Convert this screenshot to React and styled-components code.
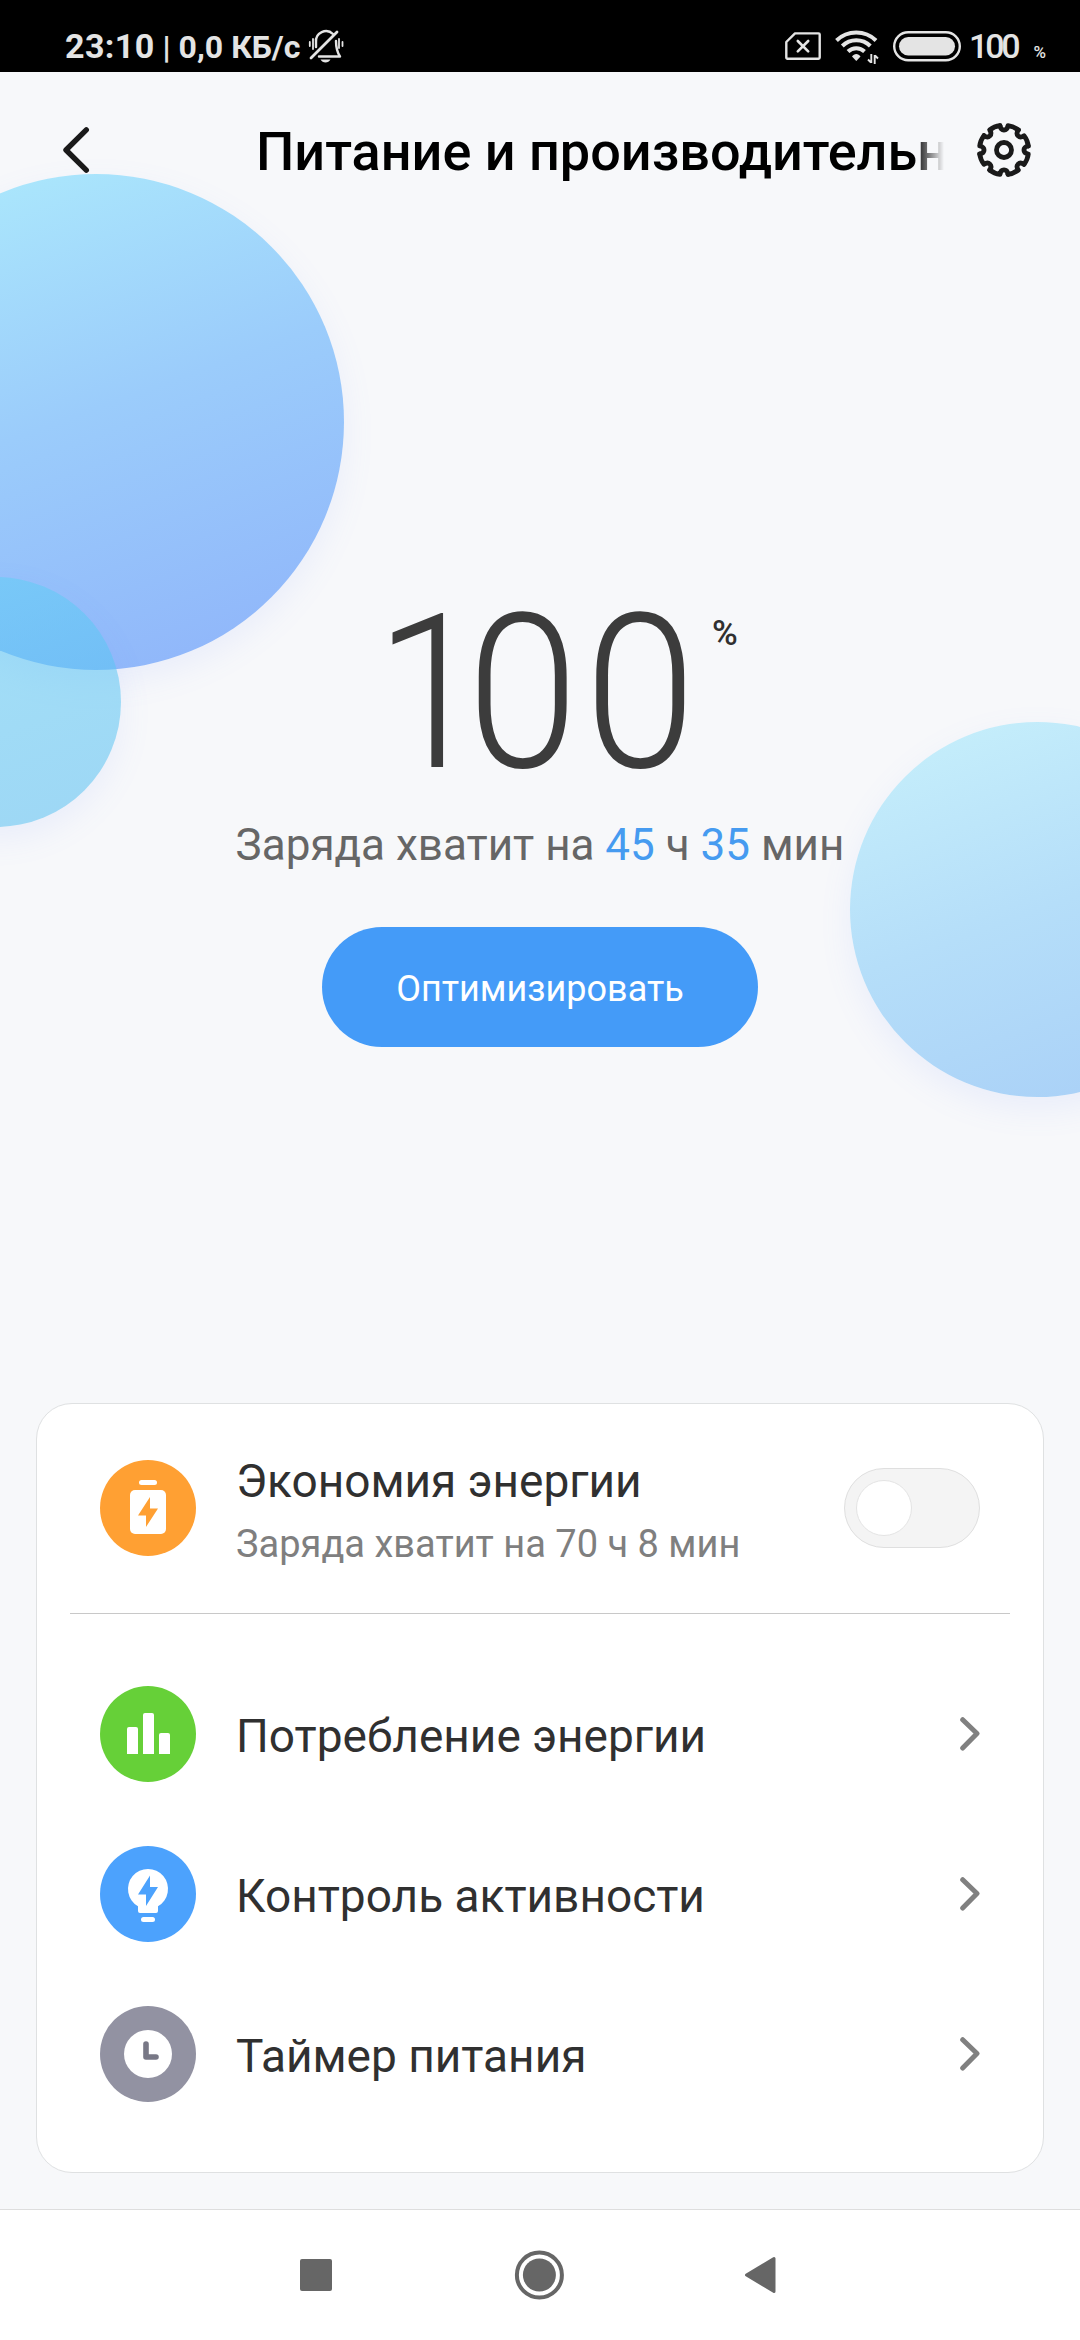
import styled, { createGlobalStyle } from 'styled-components'


const GlobalStyle = createGlobalStyle`
    * {
        box-sizing: border-box;
    }

    body {
        margin: 0;
        background-color: #f7f8fa;
        font-family: Roboto, "Noto Sans", sans-serif;
    }
`

const Screen = styled.div`
    position: relative;
    display: flex;
    flex-direction: column;
    width: 1080px;
    height: 2340px;
    overflow: hidden;
    background-color: #f7f8fa;
`

const StatusBar = styled.div`
    display: flex;
    align-items: flex-start;
    justify-content: space-between;
    height: 72px;
    padding: 0 34px 0 65px;
    background-color: #000;
    color: #e4e4e4;
`

const StatusGroup = styled.div`
    display: flex;
    align-items: baseline;
    padding-top: 25px;
    line-height: 42px;
    white-space: pre;

    svg {
        align-self: flex-start;
    }
`

const StatusIcons = styled.div`
    display: flex;
    align-self: flex-start;
    gap: 14px;
`

const Clock = styled.span`
    font-size: 34px;
    font-weight: 700;
    letter-spacing: 0.4px;
`

const Traffic = styled.span`
    margin-right: 8px;
    font-size: 32px;
    font-weight: 700;
`

const BatteryLevel = styled.span`
    margin: 0 16px 0 8px;
    font-size: 34px;
    font-weight: 500;
    letter-spacing: -3.2px;
`

const BatteryUnit = styled.span`
    font-size: 17px;
    font-weight: 500;
`

const Header = styled.header`
    position: relative;
    z-index: 1;
    display: flex;
    align-items: center;
    height: 156px;
    padding: 0 48px 0 60px;
`

const Title = styled.h1`
    flex: 1;
    overflow: hidden;
    margin: 4px 32px 0 166px;
    color: #000;
    font-size: 54px;
    font-weight: 500;
    line-height: 72px;
    white-space: nowrap;
    -webkit-mask-image: linear-gradient(to right, #000 calc(100% - 30px), transparent);
    mask-image: linear-gradient(to right, #000 calc(100% - 30px), transparent);
`

// the bubbles float behind the content
const Bubble = styled.div`
    position: absolute;
    left: ${props => props.$x}px;
    top: ${props => props.$y}px;
    width: ${props => props.$size}px;
    height: ${props => props.$size}px;
    border-radius: 50%;
    background: ${props => props.$fill};
    box-shadow: 0 12px 32px rgba(120, 150, 255, 0.1);
`

const Hero = styled.section`
    position: relative;
    display: flex;
    flex-direction: column;
    align-items: center;
    height: 1175px;
    padding-top: 364px;
`

const Level = styled.div`
    display: flex;
    align-self: flex-start;
    align-items: flex-start;
    height: 200px;
    margin-left: 375px;
    color: #3c3c3c;
`

const LevelValue = styled.span`
    width: 337px;
    font-size: 216px;
    font-weight: 300;
    line-height: 203px;
    letter-spacing: 6.7px;
    white-space: nowrap;
    transform: scaleX(0.93);
    transform-origin: left;
`

const FirstDigit = styled.span`
    letter-spacing: -21px;
`

const LevelUnit = styled.span`
    margin-top: 21px;
    color: #303030;
    font-size: 35px;
    font-weight: 500;
    line-height: 42px;
`

const Remaining = styled.p`
    margin: 23px 0 0;
    color: #666;
    font-size: 44px;
    line-height: 60px;
    white-space: nowrap;

    b {
        color: #469bf0;
        font-weight: 400;
    }
`

const OptimizeButton = styled.button`
    width: 436px;
    height: 120px;
    margin-top: 52px;
    padding: 4px 0 0;
    border: 0;
    border-radius: 60px;
    background-color: #449bf8;
    color: #fff;
    font-family: inherit;
    font-size: 36px;
`

const Card = styled.section`
    position: relative;
    height: 770px;
    margin: 0 36px;
    padding-bottom: 38px;
    border: 1px solid #dfe1e2;
    border-radius: 36px;
    background-color: #fff;
`

const Row = styled.div`
    display: flex;
    align-items: center;
    height: 160px;
    padding: 0 63px;
`

const SaverRow = styled(Row)`
    height: 208px;
`

const Divider = styled.div`
    height: 1px;
    margin: 1px 33px 40px;
    background-color: #c8c8c8;
`

const RowIcon = styled.span`
    display: flex;
    width: 96px;
    height: 96px;
    margin-right: 40px;
    border-radius: 50%;
    background-color: ${props => props.$color};
`

const RowText = styled.div`
    flex: 1;
    padding-top: 4px;
    white-space: nowrap;
`

const RowTitle = styled.div`
    color: #303030;
    font-size: 46px;
    line-height: 60px;
`

const RowHint = styled.div`
    margin-top: 8px;
    color: #7f7f7f;
    font-size: 38px;
    line-height: 50px;
`

const Switch = styled.span`
    display: flex;
    align-items: center;
    width: 136px;
    height: 80px;
    padding-left: 11px;
    border: 1px solid #dfdfdf;
    border-radius: 40px;
    background-color: #f4f4f4;
`

const Knob = styled.span`
    width: 56px;
    height: 56px;
    border: 1px solid #e4e4e4;
    border-radius: 50%;
    background-color: #fff;
`

const NavBar = styled.nav`
    display: flex;
    align-items: center;
    justify-content: space-between;
    height: 131px;
    margin-top: auto;
    padding: 0 300px;
    border-top: 1px solid #dedede;
    background-color: #fff;
`

const MuteIcon = () => (
    <svg width="36" height="40" viewBox="0 -3 36 40" fill="none" stroke="#e4e4e4" strokeWidth="2.400" strokeLinecap="round">
        <path d="M8 19v-5a10 10 0 0 1 17-8" />
        <path d="M28 13c0 8 1 11 4 15.500H11" strokeLinejoin="round" />
        <path d="M3 30 29 4" strokeWidth="2.800" />
        <path d="M12.500 31.500h10c-2 4-8 4-10 0z" fill="#e4e4e4" stroke="none" />
        <path d="M1.800 14v4M5 11v10M31 11v9M34.500 14v4" strokeWidth="1.800" />
    </svg>
)

const SimIcon = () => (
    <svg width="36" height="42" viewBox="0 0 36 42" fill="none" stroke="#e4e4e4" strokeWidth="2.400" strokeLinejoin="round" strokeLinecap="round">
        <path d="M10 8.400H33.500a1.200 1.200 0 0 1 1.200 1.200V32.600a1.200 1.200 0 0 1-1.200 1.200H2.500a1.200 1.200 0 0 1-1.200-1.200V17z" />
        <path d="M12.800 16 23.200 26.400M23.200 16 12.800 26.400" strokeWidth="2.600" />
    </svg>
)

const WifiIcon = () => (
    <svg width="44" height="42" viewBox="0 0 44 42" fill="none" stroke="#e4e4e4" strokeWidth="4">
        <path d="M1.500 15.500a28.500 28.500 0 0 1 39.500 0" />
        <path d="M7.300 21a20 20 0 0 1 28 0" />
        <path d="M13 26.500a12 12 0 0 1 16.500 0" />
        <path d="M17 31.500c2-3.400 6.500-3.400 8.500 0l-4.200 4.500z" fill="#e4e4e4" stroke="none" />
        <path d="M36.300 29v9M33 34.500l3 3M39.700 39v-9M43 33.500l-3-3" strokeWidth="1.900" />
    </svg>
)

const BatteryIcon = () => (
    <svg width="68" height="42" viewBox="0 0 68 42">
        <rect x="1.200" y="7.200" width="65.600" height="28" rx="14" fill="none" stroke="#e4e4e4" strokeWidth="2.400" />
        <rect x="6" y="12" width="56" height="18.500" rx="9.250" fill="#e4e4e4" />
    </svg>
)

const BackIcon = () => (
    <svg width="30" height="50" viewBox="0 0 30 50" fill="none" stroke="#1a1a1a" strokeWidth="5.400" strokeLinecap="round" strokeLinejoin="round">
        <path d="M26.300 4.800 6 25 26.300 45.200" />
    </svg>
)

// eight teeth, each separated by a small round notch
const teeth = Array.from({ length: 8 }, (_, i) => i * 45)

const GearIcon = () => (
    <svg width="56" height="56" viewBox="-28 -28 56 56" fill="none" stroke="#1a1a1a" strokeWidth="4.800" strokeLinejoin="round" strokeLinecap="round">
        <circle r="7.500" />
        {teeth.map(angle => (
            <path
                key={angle}
                transform={`rotate(${angle})`}
                d="M-4 -24.300C-3 -18.500 3 -18.500 4 -24.300Q9.700 -23.600 14.350 -20"
            />
        ))}
    </svg>
)

const BatterySaverIcon = () => (
    <svg width="96" height="96" viewBox="0 0 96 96" fill="#fff">
        <rect x="39" y="20" width="18" height="5" rx="2.500" />
        <rect x="30" y="30" width="36" height="44" rx="5" />
        <path d="M50 37 38 55.500h8V67L58 48.500h-8z" fill="#ffa033" />
    </svg>
)

const ChartIcon = () => (
    <svg width="96" height="96" viewBox="0 0 96 96" fill="#fff">
        <path d="M27 68V43a2 2 0 0 1 2-2h7a2 2 0 0 1 2 2v25z" />
        <path d="M43 68V29a2 2 0 0 1 2-2h7a2 2 0 0 1 2 2v39z" />
        <path d="M59 68V49a2 2 0 0 1 2-2h7a2 2 0 0 1 2 2v19z" />
    </svg>
)

const BulbIcon = () => (
    <svg width="96" height="96" viewBox="0 0 96 96" fill="#fff">
        <path d="M38 60.300A20 20 0 1 1 58 60.300V65a2 2 0 0 1-2 2H40a2 2 0 0 1-2-2z" />
        <rect x="41" y="71" width="14" height="5" rx="2.500" />
        <path d="M50 29.500 38 48.500h8V60L58 41h-8z" fill="#4ca2fd" />
    </svg>
)

const TimerIcon = () => (
    <svg width="96" height="96" viewBox="0 0 96 96">
        <circle cx="48" cy="48" r="24" fill="#fff" />
        <path d="M46 38v13h10" fill="none" stroke="#787886" strokeWidth="5.600" strokeLinecap="round" strokeLinejoin="round" />
    </svg>
)

const ChevronIcon = () => (
    <svg width="21" height="36" viewBox="0 0 21 36" fill="none" stroke="#808080" strokeWidth="5" strokeLinecap="round" strokeLinejoin="round">
        <path d="M3.700 3.700 18 17.500 3.700 32" />
    </svg>
)

const NavSquare = () => (
    <svg width="32" height="32" viewBox="0 0 32 32">
        <rect width="32" height="32" rx="2" fill="#666" />
    </svg>
)

const NavCircle = () => (
    <svg width="50" height="50" viewBox="-1.400 0 50 50" overflow="visible">
        <circle cx="25" cy="25" r="22.500" fill="none" stroke="#666" strokeWidth="4" />
        <circle cx="25" cy="25" r="16.500" fill="#666" />
    </svg>
)

const NavTriangle = () => (
    <svg width="36" height="38" viewBox="0 0 36 38">
        <path d="M2.500 19 30 2.500v33z" fill="#666" stroke="#666" strokeWidth="3" strokeLinejoin="round" />
    </svg>
)

const items = [
    { title: 'Потребление энергии', color: '#66d038', Icon: ChartIcon },
    { title: 'Контроль активности', color: '#4ca2fd', Icon: BulbIcon },
    { title: 'Таймер питания', color: '#9292a2', Icon: TimerIcon },
]

const App = () => {
    return (
        <Screen>
            <GlobalStyle />

            <Bubble $x={-152} $y={174} $size={496} $fill="linear-gradient(160deg, #ace9fc 5%, #9bccfb 48%, #8fb4fa 97%)" />
            <Bubble $x={-129} $y={577} $size={250} $fill="linear-gradient(160deg, rgba(100, 208, 246, 0.56), rgba(74, 184, 240, 0.52))" />
            <Bubble $x={850} $y={722} $size={375} $fill="linear-gradient(160deg, #c6effb 5%, #b5def9 50%, #a9d0f7 95%)" />

            <StatusBar>
                <StatusGroup>
                    <Clock>23:10</Clock>
                    <Traffic> | 0,0 КБ/с</Traffic>
                    <MuteIcon />
                </StatusGroup>
                <StatusGroup>
                    <StatusIcons>
                        <SimIcon />
                        <WifiIcon />
                        <BatteryIcon />
                    </StatusIcons>
                    <BatteryLevel>100</BatteryLevel>
                    <BatteryUnit>%</BatteryUnit>
                </StatusGroup>
            </StatusBar>

            <Header>
                <BackIcon />
                <Title>Питание и производительность</Title>
                <GearIcon />
            </Header>

            <Hero>
                <Level>
                    <LevelValue><FirstDigit>1</FirstDigit>00</LevelValue>
                    <LevelUnit>%</LevelUnit>
                </Level>
                <Remaining>Заряда хватит на <b>45</b> ч <b>35</b> мин</Remaining>
                <OptimizeButton>Оптимизировать</OptimizeButton>
            </Hero>

            <Card>
                <SaverRow>
                    <RowIcon $color="#ffa033"><BatterySaverIcon /></RowIcon>
                    <RowText>
                        <RowTitle>Экономия энергии</RowTitle>
                        <RowHint>Заряда хватит на 70 ч 8 мин</RowHint>
                    </RowText>
                    <Switch><Knob /></Switch>
                </SaverRow>

                <Divider />

                {items.map(({ title, color, Icon }) => (
                    <Row key={title}>
                        <RowIcon $color={color}><Icon /></RowIcon>
                        <RowText>
                            <RowTitle>{title}</RowTitle>
                        </RowText>
                        <ChevronIcon />
                    </Row>
                ))}
            </Card>

            <NavBar>
                <NavSquare />
                <NavCircle />
                <NavTriangle />
            </NavBar>
        </Screen>
    )
}

export default App
